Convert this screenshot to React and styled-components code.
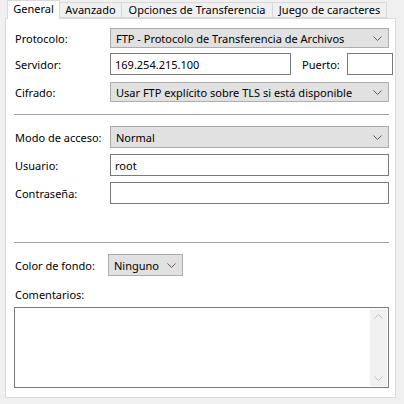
import styled, { createGlobalStyle } from "styled-components";

const Global = createGlobalStyle`
  html, body {
    margin: 0;
    padding: 0;
    background: #f0f0f0;
  }
  body {
    font-family: "Noto Sans", "Open Sans", sans-serif;
    font-size: 11px;
    color: #000;
  }
`;

const Window = styled.div`
  width: 404px;
  height: 404px;
  padding-left: 5px;
  box-sizing: border-box;
  background: #f0f0f0;
`;

const TabStrip = styled.div`
  display: flex;
  height: 18px;
  padding-left: 2px;
  align-items: flex-end;
`;

const Tab = styled.div`
  box-sizing: border-box;
  width: ${(p) => p.$w}px;
  height: ${(p) => (p.$active ? 19 : 16)}px;
  margin-bottom: ${(p) => (p.$active ? -1 : 0)}px;
  background: ${(p) => (p.$active ? "#fff" : "#f0f0f0")};
  border: 1px solid #d9d9d9;
  border-bottom: ${(p) => (p.$active ? "none" : "1px solid #d9d9d9")};
  border-left: ${(p) => (p.$active ? "1px solid #d9d9d9" : "none")};
  display: flex;
  align-items: center;
  justify-content: center;
  line-height: 14px;
  padding-bottom: ${(p) => (p.$active ? 2 : 0)}px;
  position: relative;
  z-index: ${(p) => (p.$active ? 1 : 0)};
  white-space: nowrap;
`;

const Panel = styled.div`
  box-sizing: border-box;
  width: 391px;
  height: 380px;
  background: #fff;
  border: 1px solid #d9d9d9;
  padding: 9px 6px 0 8px;
  display: flex;
  flex-direction: column;
`;

const Row = styled.div`
  display: flex;
  align-items: center;
  margin-top: ${(p) => p.$mt || 0}px;
  height: ${(p) => p.$h || 22}px;
`;

const Label = styled.div`
  width: ${(p) => p.$w || 95}px;
  flex-shrink: 0;
  padding-left: 1px;
  white-space: nowrap;
`;

const Select = styled.div`
  box-sizing: border-box;
  height: ${(p) => p.$h || 20}px;
  width: ${(p) => (p.$w ? p.$w + "px" : "auto")};
  flex: ${(p) => (p.$w ? "none" : 1)};
  background: #e1e1e1;
  border: 1px solid #adadad;
  display: flex;
  align-items: center;
  padding: 0 6px 0 5px;
  justify-content: space-between;
  white-space: nowrap;
`;

const Input = styled.div`
  box-sizing: border-box;
  height: 22px;
  width: ${(p) => (p.$w ? p.$w + "px" : "auto")};
  flex: ${(p) => (p.$w ? "none" : 1)};
  background: #fff;
  border: 1px solid #7a7a7a;
  display: flex;
  align-items: center;
  padding-left: 4px;
`;

const PortLabel = styled.div`
  margin: 0 7px 0 11px;
`;

const Separator = styled.div`
  height: 1px;
  background: #a0a0a0;
  margin-top: ${(p) => p.$mt}px;
`;

const CommentLabel = styled.div`
  margin-top: ${(p) => p.$mt}px;
  padding-left: 1px;
  line-height: 16px;
`;

const TextArea = styled.div`
  box-sizing: border-box;
  margin-top: 4px;
  height: 81px;
  border: 1px solid #7a7a7a;
  background: #fff;
  display: flex;
  justify-content: flex-end;
  padding: 1px;
`;

const ScrollTrack = styled.div`
  width: 17px;
  background: #f0f0f0;
  display: flex;
  flex-direction: column;
  justify-content: space-between;
  align-items: center;
  padding: 5px 0;
`;

const Chevron = ({ up, color = "#606060" }) => (
  <svg width="9" height="5" viewBox="0 0 9 5">
    <polyline
      points={up ? "0.5,4.5 4.5,0.5 8.5,4.5" : "0.5,0.5 4.5,4.5 8.5,0.5"}
      fill="none"
      stroke={color}
      strokeWidth="1"
    />
  </svg>
);

export default function App() {
  return (
    <Window>
      <Global />
      <TabStrip>
        <Tab $active $w={53}>General</Tab>
        <Tab $w={62}>Avanzado</Tab>
        <Tab $w={151}>Opciones de Transferencia</Tab>
        <Tab $w={114}>Juego de caracteres</Tab>
      </TabStrip>
      <Panel>
        <Row $h={20}>
          <Label>Protocolo:</Label>
          <Select>
            <span>FTP - Protocolo de Transferencia de Archivos</span>
            <Chevron />
          </Select>
        </Row>
        <Row $mt={5}>
          <Label>Servidor:</Label>
          <Input $w={181}>169.254.215.100</Input>
          <PortLabel>Puerto:</PortLabel>
          <Input $w={46} />
        </Row>
        <Row $mt={7} $h={20}>
          <Label>Cifrado:</Label>
          <Select>
            <span>Usar FTP explícito sobre TLS si está disponible</span>
            <Chevron />
          </Select>
        </Row>
        <Separator $mt={12} />
        <Row $mt={11}>
          <Label>Modo de acceso:</Label>
          <Select $h={22}>
            <span>Normal</span>
            <Chevron />
          </Select>
        </Row>
        <Row $mt={6}>
          <Label>Usuario:</Label>
          <Input>root</Input>
        </Row>
        <Row $mt={6}>
          <Label>Contraseña:</Label>
          <Input />
        </Row>
        <Separator $mt={38} />
        <Row $mt={11}>
          <Label $w={93}>Color de fondo:</Label>
          <Select $w={75} $h={22}>
            <span>Ninguno</span>
            <Chevron />
          </Select>
        </Row>
        <CommentLabel $mt={11}>Comentarios:</CommentLabel>
        <TextArea>
          <ScrollTrack>
            <Chevron up color="#c2c2c2" />
            <Chevron color="#c2c2c2" />
          </ScrollTrack>
        </TextArea>
      </Panel>
    </Window>
  );
}
